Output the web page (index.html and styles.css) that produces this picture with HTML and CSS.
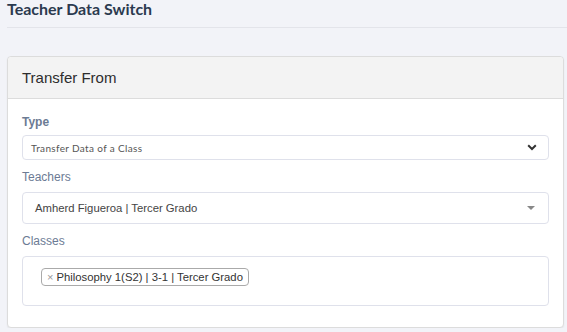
FILE: index.html
```html
<!DOCTYPE html>
<html lang="en">
<head>
    <meta charset="UTF-8">
    <meta name="viewport" content="width=device-width, initial-scale=1.0">
    <title>Teacher Data Switch</title>
    <link rel="stylesheet" href="styles.css">
</head>
<body>

    <div class="page">
        <h1 class="page-title">Teacher Data Switch</h1>

        <div class="card">
            <div class="card-header">Transfer From</div>

            <div class="card-body">
                <div class="field field-type">
                    <label class="field-label label-bold">Type</label>
                    <div class="select-box">
                        <span class="select-text">Transfer Data of a Class</span>
                        <svg class="chevron" width="10" height="7" viewBox="0 0 10 7">
                            <path d="M1.2 1.3 L5 5 L8.8 1.3" fill="none" stroke="#333" stroke-width="2"/>
                        </svg>
                    </div>
                </div>

                <div class="field">
                    <label class="field-label">Teachers</label>
                    <div class="select2-box">
                        <span class="select2-text">Amherd Figueroa | Tercer Grado</span>
                        <span class="caret"></span>
                    </div>
                </div>

                <div class="field">
                    <label class="field-label">Classes</label>
                    <div class="multi-box">
                        <span class="tag"><span class="tag-remove">×</span>Philosophy 1(S2) | 3-1 | Tercer Grado</span>
                    </div>
                </div>
            </div>
        </div>
    </div>

</body>
</html>
```

FILE: styles.css
```css
/* General Styles */
body {
    margin: 0;
    padding: 0;
    background-color: #f2f3f8;
    font-family: 'Liberation Sans', Arial, sans-serif;
    color: #333;
}

.page {
    padding: 0 0 0 7px;
}

.page-title {
    font-family: 'Lato', sans-serif;
    font-size: 16px;
    font-weight: 700;
    line-height: 18px;
    color: #2b3a4f;
    margin: 0;
    padding: 0 0 9px 0;
    border-bottom: 1px solid #e3e4ea;
}

/* Card */
.card {
    margin: 28px 3px 0 0;
    background-color: #fff;
    border: 1px solid #dcdcdc;
    border-radius: 4px;
    box-shadow: 0 1px 2px rgba(0, 0, 0, 0.06);
}

.card-header {
    background-color: #f3f3f3;
    border-bottom: 1px solid #dcdcdc;
    border-radius: 4px 4px 0 0;
    padding: 11px 14px;
    font-size: 15px;
    line-height: 19px;
    color: #2d2d2d;
}

.card-body {
    padding: 15px 14px 21px 14px;
}

/* Fields */
.field {
    margin-top: 9px;
}

.field-type {
    margin-top: 0;
}

.field-label {
    display: block;
    font-size: 12px;
    line-height: 16px;
    color: #6c7b94;
    margin-bottom: 7px;
}

.label-bold {
    font-weight: 700;
    margin-bottom: 5px;
}

.select-box,
.select2-box,
.multi-box {
    border: 1px solid #dfe1eb;
    border-radius: 4px;
    background-color: #fff;
    display: flex;
    align-items: center;
}

.select-box {
    height: 23px;
    padding: 0 8px 0 8px;
    justify-content: space-between;
}

.select-text {
    font-family: 'Lato', sans-serif;
    font-size: 10px;
    letter-spacing: 0.35px;
    color: #555;
}

.chevron {
    margin-right: 3px;
}

.select2-box {
    height: 30px;
    padding: 0 13px 0 12px;
    justify-content: space-between;
}

.select2-text {
    font-size: 11.3px;
    color: #444;
}

.caret {
    width: 0;
    height: 0;
    border-left: 4px solid transparent;
    border-right: 4px solid transparent;
    border-top: 4px solid #888;
}

/* Multi select */
.multi-box {
    height: 48px;
    align-items: flex-start;
    padding: 0 18px;
}

.tag {
    margin-top: 11px;
    display: inline-flex;
    align-items: center;
    height: 16px;
    padding: 0 5px;
    border: 1px solid #aaa;
    border-radius: 4px;
    background-color: #fff;
    font-size: 11.3px;
    color: #333;
}

.tag-remove {
    color: #999;
    font-size: 11px;
    margin-right: 3px;
}
```
